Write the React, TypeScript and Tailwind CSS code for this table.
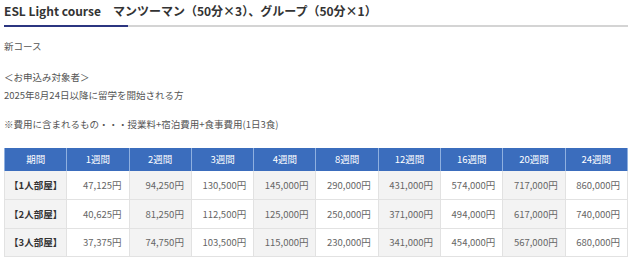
const cols = ["期間", "1週間", "2週間", "3週間", "4週間", "8週間", "12週間", "16週間", "20週間", "24週間"];

const rows = [
  { label: "【1人部屋】", prices: ["47,125円", "94,250円", "130,500円", "145,000円", "290,000円", "431,000円", "574,000円", "717,000円", "860,000円"] },
  { label: "【2人部屋】", prices: ["40,625円", "81,250円", "112,500円", "125,000円", "250,000円", "371,000円", "494,000円", "617,000円", "740,000円"] },
  { label: "【3人部屋】", prices: ["37,375円", "74,750円", "103,500円", "115,000円", "230,000円", "341,000円", "454,000円", "567,000円", "680,000円"] },
];

export default function App() {
  return (
    <div
      className="w-[640px] h-[268px] bg-white px-1 text-[#555] overflow-hidden"
      style={{ fontFamily: '"Noto Sans CJK JP", "Noto Sans", sans-serif' }}
    >
      <div className="relative h-[27px] border-b-2 border-[#d4d4d4] mr-[8px]">
        <h2 className="pt-[2px] text-[12px] leading-[18px] font-bold text-[#333]">
          ESL Light course　マンツーマン（50分×3）、グループ（50分×1）
        </h2>
        <div className="absolute left-0 -bottom-[2px] h-[2px] w-[124px] bg-[#2b3580]" />
      </div>

      <div className="text-[9.5px] leading-[18px]">
        <p className="mt-[10px]">新コース</p>
        <p className="mt-[13px]">＜お申込み対象者＞</p>
        <p>2025年8月24日以降に留学を開始される方</p>
        <p className="mt-[11px]">※費用に含まれるもの・・・授業料+宿泊費用+食事費用(1日3食)</p>
      </div>

      <table className="mt-[15px] w-[624px] table-fixed border-collapse text-[9.5px]">
        <thead>
          <tr className="h-[23px] bg-[#3b6dbd] text-white">
            {cols.map((c) => (
              <th key={c} className="border-x border-[#8fb0e0] font-normal text-center">
                {c}
              </th>
            ))}
          </tr>
        </thead>
        <tbody>
          {rows.map((r) => (
            <tr key={r.label} className="h-[28.5px] border-b border-[#e2e2e2]">
              <td className="border-x border-[#e2e2e2] bg-[#f3f3f3] text-center font-bold text-[#333]">
                {r.label}
              </td>
              {r.prices.map((p, i) => (
                <td
                  key={p}
                  className={
                    i % 2 === 0
                      ? "border-x border-[#e2e2e2] bg-white text-right pr-[7px] text-[#666]"
                      : "border-x border-[#e2e2e2] bg-[#f3f3f3] text-right pr-[7px] text-[#666]"
                  }
                >
                  {p}
                </td>
              ))}
            </tr>
          ))}
        </tbody>
      </table>
    </div>
  );
}
